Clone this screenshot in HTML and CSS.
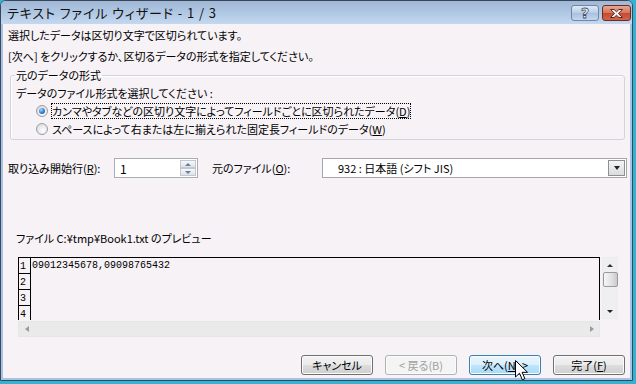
FILE: index.html
```html
<!DOCTYPE html>
<html lang="ja">
<head>
  <meta charset="UTF-8">
  <title>テキスト ファイル ウィザード - 1 / 3</title>
  <link rel="stylesheet" href="styles.css">
</head>
<body>
  <div class="window">
    <div class="titlebar">
      <span class="title">テキスト ファイル ウィザード - 1 / 3</span>
      <div class="caption">
        <button class="cap help" aria-label="ヘルプ">?</button>
        <button class="cap close" aria-label="閉じる">
          <svg width="15" height="11" viewBox="0 0 15 11">
            <path d="M1.5 1.5h3.5l2.5 2.3 2.5-2.3h3.5l-4.2 4 4.2 4h-3.5l-2.5-2.3-2.5 2.3h-3.5l4.2-4z" fill="#fff" stroke="#5a2a22" stroke-width="1" stroke-linejoin="round"/>
          </svg>
        </button>
      </div>
    </div>

    <div class="client">
      <p class="intro">選択したデータは区切り文字で区切られています。</p>
      <p class="intro">[次へ] をクリックするか、区切るデータの形式を指定してください。</p>

      <fieldset class="group">
        <legend>元のデータの形式</legend>
        <div class="prompt">データのファイル形式を選択してください :</div>
        <div class="radio">
          <span class="dot checked"></span>
          <span class="focus">カンマやタブなどの区切り文字によってフィールドごとに区切られたデータ(<u>D</u>)</span>
        </div>
        <div class="radio">
          <span class="dot"></span>
          <span>スペースによって右または左に揃えられた固定長フィールドのデータ(<u>W</u>)</span>
        </div>
      </fieldset>

      <div class="options">
        <span class="opt-label start-label">取り込み開始行(<u>R</u>):</span>
        <div class="spin">
          <span class="spin-value">1</span>
          <div class="spin-btns">
            <span class="spin-btn"><i class="tri up"></i></span>
            <span class="spin-btn"><i class="tri down"></i></span>
          </div>
        </div>
        <span class="opt-label origin-label">元のファイル(<u>O</u>):</span>
        <div class="combo">
          <span class="combo-value">932 : 日本語 (シフト JIS)</span>
          <span class="drop"><i class="tri down dark"></i></span>
        </div>
      </div>

      <div class="preview-label">ファイル C:¥tmp¥Book1.txt のプレビュー</div>

      <div class="preview">
        <div class="preview-main">
          <div class="grid">
            <div class="row"><span class="num">1</span><span class="data">09012345678,09098765432</span></div>
            <div class="row"><span class="num">2</span><span class="data"></span></div>
            <div class="row"><span class="num">3</span><span class="data"></span></div>
            <div class="row"><span class="num">4</span><span class="data"></span></div>
          </div>
          <div class="vscroll">
            <i class="tri up dark"></i>
            <span class="thumb"></span>
            <span class="vspace"></span>
            <i class="tri down dark"></i>
          </div>
        </div>
        <div class="hscroll">
          <i class="tri left"></i>
          <i class="tri right"></i>
        </div>
      </div>

      <div class="buttons">
        <button class="btn">キャンセル</button>
        <button class="btn" disabled>&lt; 戻る(B)</button>
        <button class="btn hot">次へ(<u>N</u>) &gt;</button>
        <button class="btn">完了(<u>F</u>)</button>
      </div>
    </div>

    <svg class="pointer" width="13" height="21" viewBox="0 0 13 21">
      <path d="M0.5 0.5v16.5l4-3.8 2.8 6.6 2.6-1.1-2.8-6.4h5.4z" fill="#fff" stroke="#000" stroke-width="1" stroke-linejoin="miter"/>
    </svg>
  </div>
</body>
</html>
```

FILE: styles.css
```css
* { box-sizing: border-box; }
body {
  margin: 0;
  background: #30b4d4;
  font-family: "Noto Sans CJK JP", sans-serif;
  font-size: 11px;
  font-feature-settings: "palt";
  color: #000;
}
u { text-decoration: underline; text-underline-offset: 1px; }

.window {
  position: relative;
  width: 633px;
  height: 381px;
  border: 1px solid #3a4758;
  border-radius: 6px 6px 0 0;
  display: flex;
  flex-direction: column;
  overflow: hidden;
  background: #f6f2f6;
}

/* title bar */
.titlebar {
  height: 23px;
  display: flex;
  align-items: center;
  justify-content: space-between;
  padding: 0 1px 0 6px;
  background: linear-gradient(#9fb8d6, #b2c9e4 55%, #c4d9f0);
}
.title { font-size: 13px; letter-spacing: 0.9px; color: #111; }
.caption { display: flex; gap: 3px; margin-top: 1px; }
.cap {
  height: 16px;
  padding: 0;
  border-radius: 3px;
  display: flex;
  align-items: center;
  justify-content: center;
}
.help {
  width: 28px;
  border: 1px solid #6f86a6;
  background: linear-gradient(#dfe9f5, #b9cde6 50%, #a9c0de 51%, #c3d6ee);
  color: #fff;
  font: bold 14px "DejaVu Sans", sans-serif;
  -webkit-text-stroke: 0.8px #3c4f6a;
  line-height: 14px;
}
.close {
  width: 29px;
  border: 1px solid #6e2b20;
  background: linear-gradient(#e7a895, #d4735a 50%, #c44a30 51%, #d0664a);
}

/* client area */
.client {
  flex: 1;
  display: flex;
  flex-direction: column;
  border: solid #a8c2e3;
  border-width: 0 2px 2px 2px;
  padding: 1px 0 0 5px;
}
.intro { margin: 0; line-height: 21px; }

.group {
  margin: 2px 5px 0 2px;
  padding: 3px 4px 1px 5px;
  border: 1px solid #d3d3db;
  border-radius: 3px;
  box-shadow: inset 1px 1px 0 #fff;
}
.group legend { padding: 0 1px; line-height: 12px; margin-left: -1px; }
.prompt { line-height: 18px; }
.radio {
  height: 18px;
  display: flex;
  align-items: center;
  gap: 4px;
  padding-left: 20px;
}
.dot {
  width: 12px;
  height: 12px;
  border-radius: 50%;
  border: 1px solid #9a9ea4;
  background: radial-gradient(circle at 60% 65%, #ffffff, #e6e6e6 60%, #cfcfcf);
  display: flex;
  align-items: center;
  justify-content: center;
}
.dot.checked::after {
  content: "";
  width: 6px;
  height: 6px;
  border-radius: 50%;
  background: radial-gradient(circle at 35% 30%, #a8d4fb, #2f7fd4 55%, #15489c);
}
.focus { outline: 1px dotted #000; outline-offset: 0; line-height: 14px; }

/* start row / origin */
.options {
  margin-top: 18px;
  height: 20px;
  display: flex;
  align-items: center;
}
.start-label { width: 106px; }
.origin-label { width: 110px; margin-left: 14px; }
.spin {
  width: 84px;
  height: 20px;
  border: 1px solid #abadb3;
  background: #fff;
  display: flex;
  align-items: center;
  justify-content: space-between;
  padding: 0 1px 0 5px;
  font-size: 12px;
}
.spin-btns { display: flex; flex-direction: column; }
.spin-btn {
  width: 16px;
  height: 8px;
  border: 1px solid #c4c8ce;
  background: linear-gradient(#f8f8f8, #dfe3e8);
  display: flex;
  align-items: center;
  justify-content: center;
}
.combo {
  width: 305px;
  height: 20px;
  border: 1px solid #a6a6ac;
  background: #fff;
  display: flex;
  align-items: center;
  justify-content: space-between;
  padding: 0 1px 0 15px;
}
.drop {
  width: 17px;
  height: 16px;
  border: 1px solid #8c8f94;
  background: linear-gradient(#f4f4f4, #dcdcdc);
  display: flex;
  align-items: center;
  justify-content: center;
}

/* small arrows */
.tri { width: 0; height: 0; border-style: solid; display: block; }
.tri.up { border-width: 0 3px 3px 3px; border-color: transparent transparent #5a7fb0 transparent; }
.tri.down { border-width: 3px 3px 0 3px; border-color: #5a7fb0 transparent transparent transparent; }
.tri.up.dark { border-bottom-color: #333; }
.tri.down.dark { border-top-color: #222; }
.drop .tri.down { border-width: 4px 3.5px 0 3.5px; }
.tri.left { border-width: 3.5px 4px 3.5px 0; border-color: transparent #9a9a9a transparent transparent; }
.tri.right { border-width: 3.5px 0 3.5px 4px; border-color: transparent transparent transparent #9a9a9a; }

/* preview */
.preview-label { margin-top: 52px; line-height: 16px; padding-left: 8px; }
.preview { margin: 11px 0 0 10px; width: 600px; }
.preview-main { display: flex; height: 63px; }
.grid {
  width: 582px;
  border: 1px solid #000;
  border-bottom: none;
  overflow: hidden;
}
.row { display: flex; height: 16px; }
.num {
  width: 12px;
  flex: none;
  border-right: 1px solid #000;
  border-bottom: 1px solid #000;
  font: 10px/16px "Liberation Mono", monospace;
  padding-left: 1px;
  padding-top: 1px;
}
.data { font: 10px/16px "Liberation Mono", monospace; padding-left: 1px; }
.vscroll {
  margin-left: 2px;
  width: 16px;
  height: 62px;
  background: #f0eff0;
  border: 1px solid #ececec;
  display: flex;
  flex-direction: column;
  align-items: center;
  padding: 6px 0 5px;
}
.thumb {
  margin-top: 5px;
  width: 15px;
  height: 15px;
  border: 1px solid #9a9a9a;
  border-radius: 2px;
  background: linear-gradient(90deg, #f6f6f6, #dcdcdc 70%, #c9c9c9);
}
.vspace { flex: 1; }
.hscroll {
  margin-top: 1px;
  width: 582px;
  height: 16px;
  background: #ebeaeb;
  border: 1px solid #e6e6e6;
  display: flex;
  align-items: center;
  justify-content: space-between;
  padding: 0 5px 0 6px;
}

/* dialog buttons */
.buttons {
  margin: 18px 5px 0 0;
  display: flex;
  justify-content: flex-end;
  gap: 12px;
}
.btn {
  width: 72px;
  height: 20px;
  padding: 0;
  font: 11px "Noto Sans CJK JP", sans-serif;
  font-feature-settings: "palt";
  color: #000;
  border: 1px solid #707070;
  border-radius: 3px;
  background: linear-gradient(#f2f2f2, #ebebeb 50%, #dddddd 51%, #cfcfcf);
  box-shadow: inset 0 0 0 1px #fbfbfb;
}
.btn:disabled {
  color: #a0a0a0;
  border-color: #adb2b5;
  background: #f4f4f4;
}
.btn.hot {
  border-color: #3c7fb1;
  background: linear-gradient(#eaf6fd, #d9f0fc 50%, #bee6fd 51%, #a7d9f5);
}

.pointer { position: absolute; left: 514px; top: 359px; }
```
